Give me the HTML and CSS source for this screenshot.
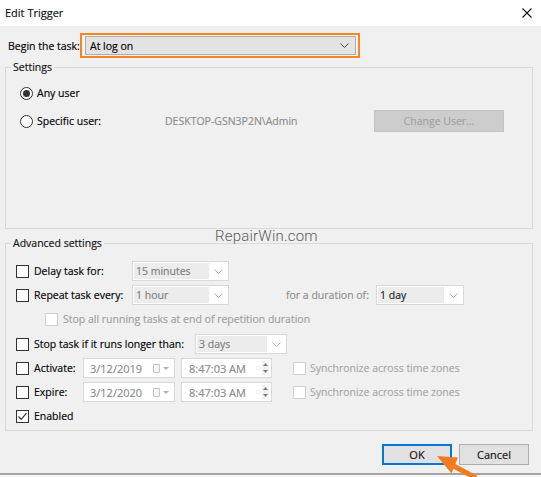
FILE: index.html
```html
<!DOCTYPE html>
<html>
<head>
<meta charset="utf-8">
<title>Edit Trigger</title>
<link rel="stylesheet" href="styles.css">
</head>
<body>
<div class="window">
  <div class="titlebar">
    <span class="title">Edit Trigger</span>
    <svg class="close" width="10" height="10" viewBox="0 0 10 10"><path d="M0.5 0.5 L9.5 9.5 M9.5 0.5 L0.5 9.5" stroke="#111" stroke-width="1.1" fill="none"/></svg>
  </div>
  <div class="content">
    <div class="begin-row">
      <span class="begin-label">Begin the task:</span>
      <div class="highlight">
        <div class="combo-main">
          <span>At log on</span>
          <svg class="chev" width="9" height="5" viewBox="0 0 9 5"><path d="M0.5 0.5 L4.5 4.5 L8.5 0.5" stroke="#444" stroke-width="1" fill="none"/></svg>
        </div>
      </div>
    </div>

    <fieldset class="group">
      <legend>Settings</legend>
      <div class="settings-body">
        <div class="srow">
          <span class="radio checked"></span>
          <span class="txt">Any user</span>
        </div>
        <div class="srow">
          <span class="radio"></span>
          <span class="txt su-label">Specific user:</span>
          <span class="user">DESKTOP-GSN3P2N\Admin</span>
          <span class="btn-disabled">Change User...</span>
        </div>
      </div>
    </fieldset>

    <fieldset class="group adv">
      <legend>Advanced settings</legend>
      <div class="adv-body">
        <div class="arow">
          <span class="chk"></span>
          <span class="txt lbl-a">Delay task for:</span>
          <div class="combo w97"><span class="ctext">15 minutes</span><svg class="chev-l" width="9" height="5" viewBox="0 0 9 5"><path d="M0.5 0.5 L4.5 4.5 L8.5 0.5" stroke="#b5b5b5" stroke-width="1" fill="none"/></svg></div>
        </div>
        <div class="arow">
          <span class="chk"></span>
          <span class="txt lbl-a">Repeat task every:</span>
          <div class="combo w97"><span class="ctext">1 hour</span><svg class="chev-l" width="9" height="5" viewBox="0 0 9 5"><path d="M0.5 0.5 L4.5 4.5 L8.5 0.5" stroke="#b5b5b5" stroke-width="1" fill="none"/></svg></div>
          <span class="dur-label">for a duration of:</span>
          <div class="combo w88"><span class="ctext dark">1 day</span><svg class="chev-l" width="9" height="5" viewBox="0 0 9 5"><path d="M0.5 0.5 L4.5 4.5 L8.5 0.5" stroke="#b5b5b5" stroke-width="1" fill="none"/></svg></div>
        </div>
        <div class="arow indent">
          <span class="chk dis"></span>
          <span class="txt gray">Stop all running tasks at end of repetition duration</span>
        </div>
        <div class="arow stop">
          <span class="chk"></span>
          <span class="txt lbl-s">Stop task if it runs longer than:</span>
          <div class="combo w92"><span class="ctext">3 days</span><svg class="chev-l" width="9" height="5" viewBox="0 0 9 5"><path d="M0.5 0.5 L4.5 4.5 L8.5 0.5" stroke="#b5b5b5" stroke-width="1" fill="none"/></svg></div>
        </div>
        <div class="arow">
          <span class="chk"></span>
          <span class="txt lbl-d">Activate:</span>
          <div class="datebox"><span class="dtext">3/12/2019</span><span class="cal"></span><svg class="tri" width="6" height="3" viewBox="0 0 6 3"><path d="M0 0 L6 0 L3 3 Z" fill="#b0b0b0"/></svg></div>
          <div class="timebox"><span class="dtext">8:47:03 AM</span><span class="spin"><svg width="5" height="3" viewBox="0 0 5 3"><path d="M0 3 L5 3 L2.5 0 Z" fill="#7a7a7a"/></svg><svg width="5" height="3" viewBox="0 0 5 3"><path d="M0 0 L5 0 L2.5 3 Z" fill="#7a7a7a"/></svg></span></div>
          <span class="chk dis sync"></span>
          <span class="txt gray2">Synchronize across time zones</span>
        </div>
        <div class="arow">
          <span class="chk"></span>
          <span class="txt lbl-d">Expire:</span>
          <div class="datebox"><span class="dtext">3/12/2020</span><span class="cal"></span><svg class="tri" width="6" height="3" viewBox="0 0 6 3"><path d="M0 0 L6 0 L3 3 Z" fill="#b0b0b0"/></svg></div>
          <div class="timebox"><span class="dtext">8:47:03 AM</span><span class="spin"><svg width="5" height="3" viewBox="0 0 5 3"><path d="M0 3 L5 3 L2.5 0 Z" fill="#7a7a7a"/></svg><svg width="5" height="3" viewBox="0 0 5 3"><path d="M0 0 L5 0 L2.5 3 Z" fill="#7a7a7a"/></svg></span></div>
          <span class="chk dis sync"></span>
          <span class="txt gray2">Synchronize across time zones</span>
        </div>
        <div class="arow">
          <span class="chk checked"><svg width="11" height="11" viewBox="0 0 11 11"><path d="M1.5 5.5 L4.2 8.3 L9.5 2.2" stroke="#333" stroke-width="1.2" fill="none"/></svg></span>
          <span class="txt">Enabled</span>
        </div>
      </div>
    </fieldset>

    <div class="buttons">
      <span class="btn ok">OK</span>
      <span class="btn">Cancel</span>
    </div>
  </div>

  <div class="watermark">RepairWin.com</div>
  <svg class="arrow" width="50" height="27" viewBox="0 0 50 27">
    <polygon points="7,6 28,7.5 21.5,23.5" fill="#f47b20"/>
    <line x1="20" y1="14" x2="46" y2="28" stroke="#f47b20" stroke-width="5"/>
  </svg>
</div>
</body>
</html>
```

FILE: styles.css
```css
* { box-sizing: border-box; }
html, body { margin: 0; padding: 0; }
body {
  width: 541px;
  height: 477px;
  background: #f7f7f7;
  font-family: "Open Sans", "Noto Sans", sans-serif;
  font-size: 10.5px;
  color: #000;
  overflow: hidden;
  white-space: nowrap;
  -webkit-text-stroke: 0.15px;
}
.window {
  position: relative;
  height: 475px;
  background: #f0f0f0;
  border-bottom: 2px solid #a3a3a3;
}
.titlebar {
  height: 26px;
  background: #fff;
  display: flex;
  align-items: center;
  justify-content: space-between;
  padding: 0 9px 1px 5px;
}
.title { font-size: 11px; color: #111; }
.close { display: block; }

.content { padding: 7px 8px 0 5px; }

.begin-row { display: flex; align-items: center; height: 25px; }
.begin-label { width: 75px; padding-left: 3px; line-height: 16px; }
.highlight {
  width: 280px;
  height: 25px;
  border: 2px solid #f7861f;
  padding: 1px 2px 1px 3px;
  background: #f3f3f3;
}
.combo-main {
  height: 19px;
  border: 1px solid #adadad;
  background: #e3e3e3;
  display: flex;
  align-items: center;
  justify-content: space-between;
  padding: 0 6px 0 4px;
  color: #000;
}
.chev { display: block; }

.group {
  margin: 1px 0 0 0;
  padding: 0;
  border: 1px solid #dadada;
  min-width: 0;
}
.group legend {
  margin-left: 5px;
  padding: 0 2px;
  line-height: 16px;
  color: #111;
}
.adv { margin-top: 6px; }

.settings-body {
  height: 153px;
  padding: 7px 0 0 14px;
  display: flex;
  flex-direction: column;
  gap: 6px;
}
.srow { display: flex; align-items: center; height: 22px; }
.radio {
  width: 13px; height: 13px;
  border: 1px solid #333;
  border-radius: 50%;
  background: #fff;
  display: flex; align-items: center; justify-content: center;
}
.radio.checked::after {
  content: "";
  width: 7px; height: 7px;
  border-radius: 50%;
  background: #333;
}
.srow .txt { margin-left: 4px; }
.su-label { width: 128px; }
.user { width: 209px; color: #8c8c8c; }
.btn-disabled {
  width: 130px; height: 22px;
  background: #cccccc;
  border: 1px solid #c4c4c4;
  color: #a3a3a3;
  display: flex; align-items: center; justify-content: center;
}

.adv-body {
  padding: 10px 0 4px 10px;
  display: flex;
  flex-direction: column;
  gap: 4px;
}
.arow { display: flex; align-items: center; height: 20px; }
.arow.indent { padding-left: 29px; }
.arow.stop { margin-top: 1px; }
.chk {
  width: 13px; height: 13px;
  border: 1px solid #333;
  background: #fff;
  flex: none;
  display: flex; align-items: center; justify-content: center;
}
.chk.dis { border-color: #cfcfcf; }
.chk svg { display: block; }
.arow .txt { margin-left: 5px; }
.lbl-a { width: 98px; }
.lbl-s { width: 161px; }
.lbl-d { width: 49px; }
.gray { color: #a0a0a0; }
.gray2 { color: #a8a8a8; margin-left: 4px !important; }

.combo {
  height: 20px;
  border: 1px solid #d9d9d9;
  background: #fff;
  display: flex;
  align-items: center;
  padding: 1px;
}
.w97 { width: 97px; }
.w88 { width: 88px; }
.w92 { width: 92px; }
.ctext {
  flex: 1;
  height: 16px;
  background: #ececec;
  color: #7c7c7c;
  padding-left: 2px;
  line-height: 16px;
}
.ctext.dark { color: #222; }
.chev-l { margin: 0 4px 0 5px; display: block; }
.dur-label { margin-left: 57px; width: 90px; color: #8e8e8e; }

.datebox, .timebox {
  height: 20px;
  border: 1px solid #d9d9d9;
  background: #fff;
  display: flex;
  align-items: center;
  color: #8a8a8a;
}
.datebox { width: 92px; padding-left: 6px; font-size: 11px; }
.timebox { width: 91px; padding-left: 7px; margin-left: 6px; font-size: 11px; }
.datebox .dtext { width: 63px; }
.timebox .dtext { width: 73px; }
.cal {
  width: 7px; height: 9px;
  border: 1px solid #c4c4c4;
  border-radius: 1px;
  background: #f4f4f4;
}
.tri { margin-left: 3px; display: block; }
.spin {
  display: flex;
  flex-direction: column;
  gap: 4px;
  align-items: center;
  width: 7px;
  background: #f2f2f2;
  padding: 2px 0;
}
.spin svg { display: block; }
.sync { margin-left: 21px; }

.buttons {
  display: flex;
  justify-content: flex-end;
  gap: 7px;
  margin-top: 13px;
  padding-right: 4px;
}
.btn {
  width: 70px; height: 21px;
  background: #e1e1e1;
  border: 1px solid #adadad;
  display: flex; align-items: center; justify-content: center;
  color: #111;
  font-size: 11px;
}
.btn.ok {
  border: 1px solid #0078d7;
  box-shadow: inset 0 0 0 1px #0078d7;
}

.watermark {
  position: absolute;
  left: 215px;
  top: 227px;
  font-family: Roboto, "Noto Sans", sans-serif;
  font-weight: 300;
  font-size: 15px;
  color: #5c5c5c;
  letter-spacing: 0.2px;
  -webkit-text-stroke: 0;
}
.arrow {
  position: absolute;
  left: 430px;
  top: 450px;
}
```
